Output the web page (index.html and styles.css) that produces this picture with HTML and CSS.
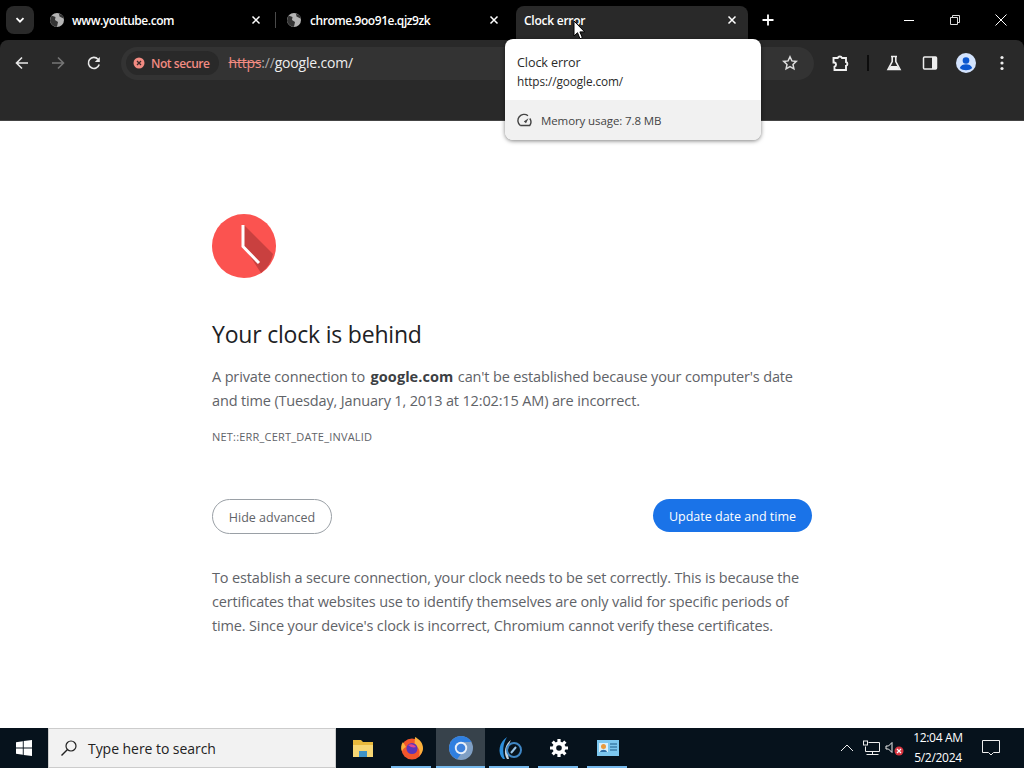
FILE: index.html
```html
<!DOCTYPE html>
<html lang="en">
<head>
<meta charset="utf-8">
<title>Clock error</title>
<link rel="stylesheet" href="styles.css">
</head>
<body>
<div class="screen">
  <header class="chrome">
    <div class="tabstrip">
      <div class="tab-search"><svg width="10" height="10" viewBox="0 0 10 10"><path d="M1.500 3.200 5 6.700l3.500-3.500" fill="none" stroke="#fff" stroke-width="1.800"/></svg></div>
      <div class="tab tab-one">
        <svg class="globe" width="16" height="16" viewBox="0 0 16 16"><circle cx="8" cy="8" r="7" fill="#b4b4b4"/><path d="M2.500 3.500 6.500 5 6 8l3 2-1 4.800C5 15 1.500 12 1 8.500zM10 1.500l.5 3 4 2L14.500 4z" fill="#333"/></svg>
        <span class="tab-title">www.youtube.com</span>
        <span class="tab-x"><svg width="10" height="10" viewBox="0 0 10 10"><path d="m1.500 1.500 7 7m0-7-7 7" stroke="#fff" stroke-width="1.500"/></svg></span>
      </div>
      <div class="tab-sep"></div>
      <div class="tab tab-two">
        <svg class="globe" width="16" height="16" viewBox="0 0 16 16"><circle cx="8" cy="8" r="7" fill="#b4b4b4"/><path d="M2.500 3.500 6.500 5 6 8l3 2-1 4.800C5 15 1.500 12 1 8.500zM10 1.500l.5 3 4 2L14.500 4z" fill="#333"/></svg>
        <span class="tab-title">chrome.9oo91e.qjz9zk</span>
        <span class="tab-x"><svg width="10" height="10" viewBox="0 0 10 10"><path d="m1.500 1.500 7 7m0-7-7 7" stroke="#fff" stroke-width="1.500"/></svg></span>
      </div>
      <div class="tab tab-active">
        <span class="tab-title">Clock error</span>
        <span class="tab-x"><svg width="10" height="10" viewBox="0 0 10 10"><path d="m1.500 1.500 7 7m0-7-7 7" stroke="#fff" stroke-width="1.500"/></svg></span>
      </div>
      <div class="tab-new"><svg width="12" height="12" viewBox="0 0 12 12"><path d="M6 .5v11M.5 6h11" stroke="#fff" stroke-width="1.800"/></svg></div>
      <div class="win-controls">
        <span class="win-btn"><svg width="12" height="12" viewBox="0 0 12 12"><path d="M1 6.500h10" stroke="#fff"/></svg></span>
        <span class="win-btn"><svg width="12" height="12" viewBox="0 0 12 12"><path d="M1.500 3.500h7v7h-7zM3.500 3.500v-2h7v7h-2" fill="none" stroke="#ddd"/></svg></span>
        <span class="win-btn"><svg width="14" height="14" viewBox="0 0 14 14"><path d="m1.500 1.500 11 11m0-11-11 11" stroke="#fff"/></svg></span>
      </div>
    </div>
    <div class="toolbar">
      <div class="nav-row">
        <span class="nav-btn"><svg width="14" height="14" viewBox="0 0 14 14"><path d="M13 7H2m5-5.500L1.500 7 7 12.500" fill="none" stroke="#e8e8e8" stroke-width="1.600"/></svg></span>
        <span class="nav-btn"><svg width="14" height="14" viewBox="0 0 14 14"><path d="M1 7h11M7 1.500 12.500 7 7 12.500" fill="none" stroke="#757575" stroke-width="1.600"/></svg></span>
        <span class="nav-btn"><svg width="14" height="14" viewBox="0 0 14 14"><path d="M12.200 8.500A5.500 5.500 0 1 1 11 3.200" fill="none" stroke="#e8e8e8" stroke-width="1.600"/><path d="M12.800 1v5h-5z" fill="#e8e8e8"/></svg></span>
        <div class="omnibox">
          <span class="chip">
            <svg width="12" height="12" viewBox="0 0 12 12"><circle cx="6" cy="6" r="5.500" fill="#f28b82"/><path d="m4 4 4 4m0-4-4 4" stroke="#3a2a2a" stroke-width="1.300"/></svg>
            <span class="chip-text">Not secure</span>
          </span>
          <span class="url"><s class="url-scheme">https</s><span class="url-slash">://</span>google.com/</span>
          <span class="star"><svg width="16" height="16" viewBox="0 0 16 16"><path d="m8 1.800 1.900 4.100 4.400.5-3.300 3 .9 4.400L8 11.600l-3.900 2.200.9-4.400-3.300-3 4.400-.5z" fill="none" stroke="#ddd" stroke-width="1.500"/></svg></span>
        </div>
        <div class="tool-icons">
          <svg width="18" height="18" viewBox="0 0 18 18"><path d="M1.500 4h4.200a2.300 2.300 0 0 1 4.300 0h4v4a2 2 0 0 1 0 3.800V16H2.500v-3.300a2.200 2.200 0 0 0 0-4.200h-1z" fill="none" stroke="#f0f0f0" stroke-width="1.900"/></svg>
          <span class="tool-sep"></span>
          <svg class="flask" width="16" height="16" viewBox="0 0 16 16"><path d="M5 1.500h6M6.200 1.500v5L2 14.500h12L9.800 6.500v-5" fill="none" stroke="#eee" stroke-width="1.600"/><path d="M4.500 11h7l2 3.500h-11z" fill="#eee"/></svg>
          <svg class="panel" width="16" height="16" viewBox="0 0 16 16"><rect x="1.500" y="2" width="13" height="12" rx="1" fill="none" stroke="#eee" stroke-width="1.500"/><rect x="10" y="2" width="4.500" height="12" fill="#eee"/></svg>
          <svg class="avatar" width="20" height="20" viewBox="0 0 20 20"><circle cx="10" cy="10" r="10" fill="#d3e3fd"/><circle cx="10" cy="7.500" r="3.300" fill="#0b57d0"/><path d="M3.800 15c1-2.800 3.500-3.800 6.200-3.800s5.200 1 6.200 3.800c-3 3-9.400 3-12.400 0z" fill="#0b57d0"/></svg>
          <svg class="kebab" width="4" height="16" viewBox="0 0 4 16"><circle cx="2" cy="2.500" r="1.600" fill="#eee"/><circle cx="2" cy="8" r="1.600" fill="#eee"/><circle cx="2" cy="13.500" r="1.600" fill="#eee"/></svg>
        </div>
      </div>
    </div>
    <div class="hover-card">
      <div class="card-top">
        <div class="card-title">Clock error</div>
        <div class="card-url">https://google.com/</div>
      </div>
      <div class="card-bottom">
        <svg width="16" height="16" viewBox="0 0 16 16"><path d="M3.300 13.500a6 6 0 0 1 7.700-9.800M12.800 6.500a6 6 0 0 1-.1 7H3.300" fill="none" stroke="#444" stroke-width="1.400"/><path d="m6.800 9.500 4.700-3.300-2.500 5z" fill="#444"/></svg>
        <span>Memory usage: 7.8 MB</span>
      </div>
    </div>
    <svg class="cursor" width="13" height="20" viewBox="0 0 13 20"><path d="M1 1v15l3.500-3.300 2.500 6 2.400-1-2.500-5.800h4.800z" fill="#fff" stroke="#000"/></svg>
  </header>

  <main class="page">
    <div class="interstitial">
      <svg class="clock" width="64" height="64" viewBox="0 0 64 64">
        <circle cx="32" cy="32" r="32" fill="#fb5350"/>
        <path d="M32 11 61 40A32 32 0 0 1 49 59L32 33z" fill="#c9403f"/>
        <path d="M31 11v21.500L47 49" fill="none" stroke="#fff" stroke-width="3"/>
      </svg>
      <h1 class="headline">Your clock is behind</h1>
      <p class="lead">A private connection to <strong>google.com</strong> can't be established because your computer's date and time (Tuesday, January 1, 2013 at 12:02:15 AM) are incorrect.</p>
      <p class="code">NET::ERR_CERT_DATE_INVALID</p>
      <div class="actions">
        <button class="btn-outline">Hide advanced</button>
        <button class="btn-primary">Update date and time</button>
      </div>
      <p class="detail">To establish a secure connection, your clock needs to be set correctly. This is because the certificates that websites use to identify themselves are only valid for specific periods of time. Since your device's clock is incorrect, Chromium cannot verify these certificates.</p>
    </div>
  </main>

  <footer class="taskbar">
    <div class="start"><svg width="16" height="16" viewBox="0 0 16 16"><path d="M0 2.200 6.800 1.200V7.500H0zM7.700 1.100 16 0v7.500H7.700zM0 8.400h6.800v6.400L0 13.800zM7.700 8.400H16V16l-8.300-1.100z" fill="#fff"/></svg></div>
    <div class="search">
      <svg width="18" height="18" viewBox="0 0 18 18"><circle cx="11" cy="7" r="5" fill="none" stroke="#222" stroke-width="1.200"/><path d="M7.500 10.500 1.500 16.500" stroke="#222" stroke-width="1.500"/></svg>
      <span>Type here to search</span>
    </div>
    <div class="apps">
      <div class="app">
        <svg width="22" height="20" viewBox="0 0 22 20"><path d="M1 2h8l2 2h10v4H1z" fill="#e8b93c"/><path d="M1 7h20v12H1z" fill="#f7d774"/><path d="M7 13h8v6H7z" fill="#3f93c8"/></svg>
      </div>
      <div class="app running">
        <svg width="24" height="24" viewBox="0 0 24 24"><circle cx="12" cy="13" r="10.500" fill="#f2552c"/><path d="M15 1c4 2 8.500 6 8 12-.3 3-2 5.500-4 7 1.500-4.500 0-9-4.500-11z" fill="#fbb03b"/><path d="M3 6c-2 2.500-2.500 6.500-1 9.500 1-3 3-4 4-4.500z" fill="#fbb03b"/><circle cx="12" cy="12.500" r="5.500" fill="#5b36b8"/><path d="M8 9c3-1.500 6-1 8 2-2 1-5 .5-8-2z" fill="#e3458c"/></svg>
      </div>
      <div class="app active running">
        <svg width="24" height="24" viewBox="0 0 24 24"><circle cx="12" cy="12" r="12" fill="#7f9fc4"/><path d="M12 0a12 12 0 0 0-4 23.300L12 18V6h10.400A12 12 0 0 0 12 0z" fill="#2f7fe0"/><circle cx="12" cy="12" r="6.200" fill="#e8f0fa"/><circle cx="12" cy="12" r="4.300" fill="#3e82dd"/></svg>
      </div>
      <div class="app running">
        <svg width="28" height="28" viewBox="0 0 28 28"><path d="M7 25C1 19 3 8 11 3 7 9 6 18 9 25z" fill="#2e8fdc"/><path d="M11 25C7 19 9 10 15 6 12 11 11 19 13 25z" fill="#c9d3dc"/><circle cx="18" cy="16" r="7" fill="none" stroke="#3f86c4" stroke-width="2"/><path d="m15 19 5-6" stroke="#9cc7ea" stroke-width="2"/></svg>
      </div>
      <div class="app running">
        <svg width="20" height="20" viewBox="0 0 20 20"><path d="M10 3.500a6.500 6.500 0 1 0 0 13 6.500 6.500 0 0 0 0-13zm0 4a2.500 2.500 0 1 1 0 5 2.500 2.500 0 0 1 0-5z" fill="#fff" fill-rule="evenodd"/><path d="M10 1v18M1 10h18M3.600 3.600l12.800 12.800M16.400 3.600 3.600 16.400" stroke="#fff" stroke-width="3.200"/><circle cx="10" cy="10" r="2.800" fill="#06121c"/></svg>
      </div>
      <div class="app running">
        <svg width="22" height="16" viewBox="0 0 22 16"><rect width="22" height="16" fill="#7cc7ef"/><rect x="2" y="3" width="9" height="9" fill="#d9f0fb"/><circle cx="6.500" cy="6.500" r="2.500" fill="#e89a3c"/><path d="M3 12c.5-3 6.500-3 7 0z" fill="#2f6fa8"/><path d="M13 4h7M13 7h7M13 10h7" stroke="#1d5c8a" stroke-width="1.200"/></svg>
      </div>
    </div>
    <div class="tray">
      <svg class="tray-chev" width="14" height="8" viewBox="0 0 14 8"><path d="m1 7 6-6 6 6" fill="none" stroke="#eee"/></svg>
      <svg class="tray-net" width="17" height="17" viewBox="0 0 17 17"><path d="M5.500 2.500h11v9h-14v-5M9.500 11.500v3M3.500 14.500h12" fill="none" stroke="#eee"/><rect x=".5" y="1" width="4" height="4" fill="none" stroke="#eee"/></svg>
      <span class="tray-vol"><svg width="20" height="17" viewBox="0 0 20 17"><path d="M1 6h2.500L7 2.500v10L3.500 9H1z" fill="none" stroke="#eee"/><circle cx="14" cy="11" r="4.500" fill="#d8343f"/><path d="m12 9 4 4m0-4-4 4" stroke="#fff" stroke-width="1.200"/></svg></span>
      <div class="clock-text"><div>12:04 AM</div><div>5/2/2024</div></div>
      <svg class="tray-note" width="18" height="16" viewBox="0 0 18 16"><path d="M.5.500h17v12h-6l-2.500 2.500-2.500-2.500h-6z" fill="none" stroke="#eee"/></svg>
    </div>
  </footer>
</div>
</body>
</html>
```

FILE: styles.css
```css
* { box-sizing: border-box; }
html, body { margin: 0; padding: 0; height: 100%; }
body { width: 1024px; height: 768px; overflow: hidden; font-family: "Open Sans", "Noto Sans", sans-serif; }
.screen { display: flex; flex-direction: column; width: 1024px; height: 768px; background: #fff; }

.chrome { position: relative; flex: none; height: 121px; background: #000; }
.tabstrip { display: flex; align-items: flex-start; height: 40px; padding: 6px 0 0 6px; }
.tab-search { display: flex; align-items: center; justify-content: center; width: 28px; height: 28px; border-radius: 8px; background: #2a2a2a; }
.tab { display: flex; align-items: center; height: 34px; padding-bottom: 6px; color: #fff; font-size: 12px; font-weight: 600; letter-spacing: -.45px; }
.tab-one { width: 226px; margin-left: 15px; }
.tab-two { width: 221px; margin-left: 10px; }
.globe { flex: none; margin-right: 7px; }
.tab-two .globe { margin-right: 8px; }
.tab-title { flex: 1; white-space: nowrap; }
.tab-x { display: flex; width: 10px; margin-right: 8px; }
.tab-one .tab-x { margin-right: 14px; }
.tab-sep { width: 1px; height: 16px; margin-top: 6px; background: #4a4a4a; }
.tab-active { width: 232px; margin-left: 9px; padding: 0 11px 6px 8px; border-radius: 8px 8px 0 0; background: #292929; letter-spacing: -.25px; }
.tab-active .tab-x { margin-right: 0; }
.tab-new { display: flex; align-items: center; justify-content: center; width: 28px; height: 28px; margin-left: 6px; }
.win-controls { display: flex; margin-left: auto; margin-top: -6px; }
.win-btn { display: flex; align-items: center; justify-content: center; width: 46px; height: 40px; }

.toolbar { height: 81px; padding: 0 0 1px; border-radius: 8px 8px 0 0; background: #292929; border-bottom: 1px solid #444; }
.nav-row { display: flex; align-items: center; height: 46px; padding-left: 15px; }
.nav-btn { display: flex; justify-content: center; width: 14px; margin-right: 22px; }
.nav-btn:nth-child(3) { margin-right: 20px; }
.omnibox { display: flex; align-items: center; width: 693px; height: 33px; padding: 0 5px; border-radius: 17px; background: #333; }
.chip { display: flex; align-items: center; gap: 6px; height: 24px; padding: 0 9px 0 7px; border-radius: 12px; background: #292929; }
.chip-text { color: #f28b82; font-size: 12px; font-weight: 600; letter-spacing: -.45px; white-space: nowrap; }
.url { margin-left: 10px; margin-top: -1px; color: #eee; font-size: 14px; letter-spacing: -.2px; white-space: nowrap; }
.url-scheme { color: #f28b82; }
.url-slash { color: #aaa; }
.star { display: flex; margin-left: auto; margin-right: 11px; margin-top: -1px; }
.tool-icons { display: flex; align-items: center; margin-left: 18px; }
.tool-sep { width: 2px; height: 16px; margin: 0 17px 0 17px; background: #0c0c0c; }
.flask { margin-right: 20px; }
.panel { margin-right: 18px; }
.avatar { margin-right: 24px; }

.hover-card { position: absolute; left: 505px; top: 39px; width: 256px; height: 101px; overflow: hidden; border-radius: 8px; background: #fff; box-shadow: 0 1px 4px rgba(0,0,0,.5); color: #2a2a2a; z-index: 2; }
.card-top { height: 61px; padding: 15px 12px 0; }
.card-title { font-size: 12.600px; line-height: 18px; letter-spacing: -.1px; }
.card-url { font-size: 11.800px; line-height: 19px; letter-spacing: -.1px; }
.card-bottom { display: flex; align-items: center; gap: 8px; height: 40px; padding-left: 12px; background: #f1f1f1; font-size: 11.500px; letter-spacing: -.1px; color: #444; }
.cursor { position: absolute; left: 573px; top: 20px; z-index: 3; }

.page { flex: 1; min-height: 0; padding: 93px 0 0 212px; background: #fff; }
.interstitial { width: 600px; color: #5f6368; }
.clock { display: block; }
.headline { margin: 41px 0 0; color: #202124; font-size: 23px; font-weight: 400; line-height: 30px; letter-spacing: -.2px; }
.lead { margin: 16px 0 0; font-size: 14.500px; line-height: 24px; letter-spacing: -.15px; }
.lead strong { margin: 0 1px 0 2px; color: #3c4043; font-weight: 700; letter-spacing: .05px; }
.code { margin: 16px 0 0; font-size: 11px; line-height: 16px; letter-spacing: .2px; text-transform: uppercase; }
.actions { display: flex; align-items: flex-start; justify-content: space-between; margin-top: 54px; }
.btn-outline { width: 120px; height: 35px; padding: 1px 0 0; border: 1px solid #9aa0a6; border-radius: 18px; background: #fff; color: #5f6368; font: 400 12.500px "Open Sans", sans-serif; }
.btn-primary { width: 159px; height: 33px; padding: 2px 0 0; border: 0; border-radius: 17px; background: #1a73e8; color: #fff; font: 500 12.500px "Open Sans", sans-serif; }
.detail { margin: 32px 0 0; font-size: 14.500px; line-height: 24px; letter-spacing: -.15px; }

.taskbar { display: flex; flex: none; align-items: stretch; height: 40px; background: #06121c; color: #fff; }
.start { display: flex; align-items: center; justify-content: center; width: 48px; }
.search { display: flex; align-items: center; gap: 10px; width: 288px; padding-left: 11px; background: #f2f2f2; border: 1px solid #ccc; color: #222; font-size: 14px; letter-spacing: -.05px; }
.apps { display: flex; margin-left: 2px; }
.app { position: relative; display: flex; align-items: center; justify-content: center; width: 49px; height: 40px; }
.running::after { content: ""; position: absolute; left: 4px; right: 5px; bottom: 0; height: 2px; background: #76b9ed; }
.app.active { background: #37424b; }
.app.active::after { left: 0; right: 0; }
.tray { display: flex; align-items: center; margin-left: auto; color: #fff; }
.tray-chev { margin-right: 9px; }
.tray-net { margin-right: 5px; }
.tray-vol { display: flex; margin-right: 6px; }
.clock-text { width: 54px; margin-right: 17px; font-size: 12px; line-height: 20px; letter-spacing: -.3px; text-align: center; white-space: nowrap; }
.tray-note { margin-right: 24px; }
```
